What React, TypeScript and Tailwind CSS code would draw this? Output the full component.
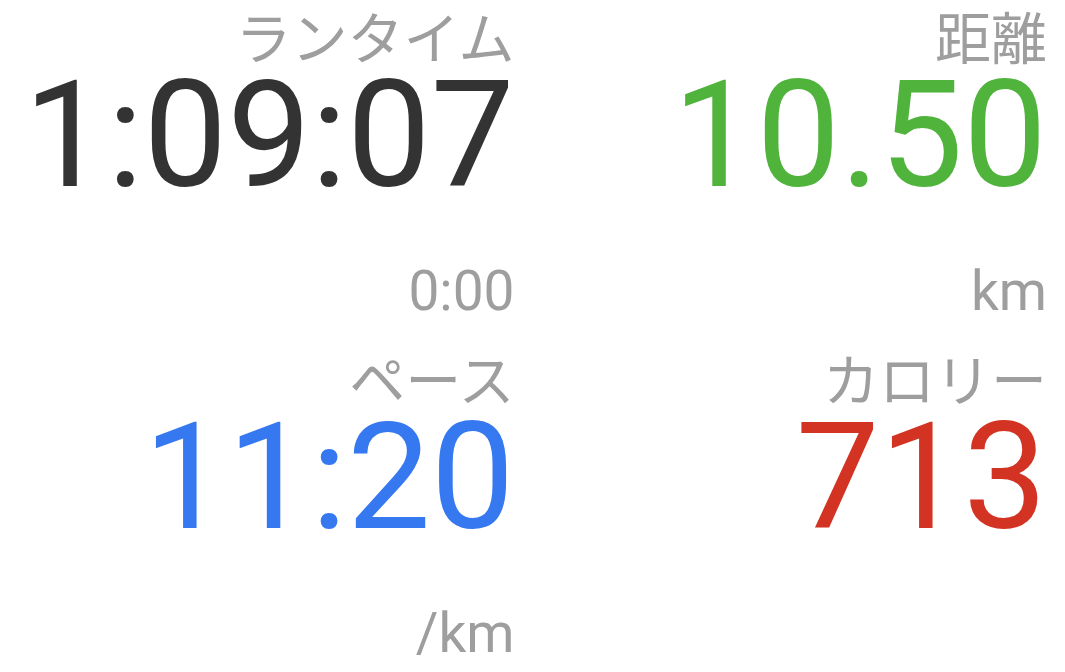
const stats = [
  { label: "ランタイム", value: "1:09:07", unit: "0:00", color: "text-[#333333]", h: "h-[342px]" },
  { label: "距離", value: "10.50", unit: "km", color: "text-[#50b33c]", h: "h-[342px]" },
  { label: "ペース", value: "11:20", unit: "/km", color: "text-[#3578f0]", h: "h-[330px]" },
  { label: "カロリー", value: "713", unit: "", color: "text-[#d33322]", h: "h-[330px]" },
];

function Stat({ label, value, unit, color, h }: (typeof stats)[number]) {
  return (
    <div className={`${h} pr-[18px] pt-3 flex flex-col items-end`}>
      <div className="text-[56px] leading-none text-[#9e9e9e]">{label}</div>
      <div className={`text-[149px] leading-none -mt-[7px] ${color}`}>{value}</div>
      <div className="mt-[54px] text-[55px] leading-none text-[#9e9e9e] h-[55px]">{unit}</div>
    </div>
  );
}

export default function App() {
  return (
    <div
      className="w-[1065px] h-[672px] bg-white grid grid-cols-2 overflow-hidden"
      style={{ fontFamily: "Roboto, 'Noto Sans CJK JP', sans-serif" }}
    >
      {stats.map((s) => (
        <Stat key={s.label} {...s} />
      ))}
    </div>
  );
}
